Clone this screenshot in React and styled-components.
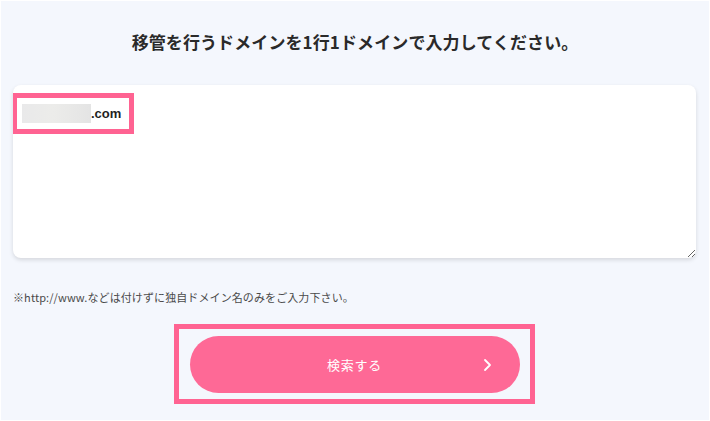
import React from "react";
import styled, { createGlobalStyle } from "styled-components";

const Global = createGlobalStyle`
  html, body { margin: 0; padding: 0; background: #f4f7fd; }
  * { box-sizing: border-box; }
`;

const Page = styled.div`
  width: 710px;
  height: 421px;
  border: 1px solid #ffffff;
  background: #f4f7fd;
  display: flex;
  flex-direction: column;
  align-items: stretch;
  font-family: "Noto Sans CJK JP", "Noto Sans", sans-serif;
`;

const Title = styled.h1`
  margin: 0;
  padding-top: 28px;
  font-size: 17px;
  line-height: 26px;
  font-weight: 700;
  color: #2a2a2a;
  text-align: center;
  letter-spacing: 0.1px;
`;

const Field = styled.div`
  position: relative;
  margin: 30px 13px 0 12px;
  height: 173px;
  background: #ffffff;
  border-radius: 8px;
  box-shadow: 0 2px 4px rgba(0, 0, 0, 0.13);
  padding: 19px 9px;
  overflow: auto;
  resize: both;
`;

const Entry = styled.div`
  display: flex;
  align-items: center;
  height: 19px;
`;

const Blurred = styled.span`
  display: inline-block;
  width: 69px;
  height: 19px;
  background: linear-gradient(90deg, #e9e9ea 0%, #ececea 45%, #e4e4e4 100%);
  filter: blur(0.4px);
`;

const Domain = styled.span`
  font-family: "Liberation Sans", Arial, sans-serif;
  font-weight: 700;
  font-size: 13px;
  color: #1f1f1f;
  margin-top: -1px;
`;

const Highlight = styled.div`
  position: absolute;
  left: -1px;
  top: 8px;
  width: 122px;
  height: 41px;
  border: 5px solid #ff6392;
  pointer-events: none;
`;

const Note = styled.p`
  margin: 31px 0 0 12px;
  font-size: 11px;
  line-height: 16px;
  color: #4a4a4a;
  letter-spacing: 0.1px;
`;

const ButtonFrame = styled.div`
  align-self: center;
  margin-top: 19px;
  margin-left: -2px;
  border: 5px solid #ff6392;
  padding: 7px 10px 6px 11px;
`;

const SearchButton = styled.button`
  position: relative;
  width: 330px;
  height: 57px;
  border: none;
  border-radius: 29px;
  background: #fe6996;
  color: #ffffff;
  font-family: "Noto Sans CJK JP", "Noto Sans", sans-serif;
  font-size: 13px;
  font-weight: 400;
  letter-spacing: 0.8px;
  display: flex;
  align-items: center;
  justify-content: center;
  cursor: pointer;
`;

const Chevron = styled.svg`
  position: absolute;
  right: 28px;
  top: 50%;
  transform: translateY(-50%);
`;

export default function App() {
  return (
    <>
      <Global />
      <Page>
        <Title>移管を行うドメインを1行1ドメインで入力してください。</Title>
        <Field>
          <Entry>
            <Blurred />
            <Domain>.com</Domain>
          </Entry>
          <Highlight />
        </Field>
        <Note>※http://www.などは付けずに独自ドメイン名のみをご入力下さい。</Note>
        <ButtonFrame>
          <SearchButton>
            検索する
            <Chevron width="9" height="13" viewBox="0 0 9 13">
              <path d="M2 1.5 L7 6.5 L2 11.5" fill="none" stroke="#fff" strokeWidth="1.8" strokeLinecap="round" strokeLinejoin="round" />
            </Chevron>
          </SearchButton>
        </ButtonFrame>
      </Page>
    </>
  );
}
